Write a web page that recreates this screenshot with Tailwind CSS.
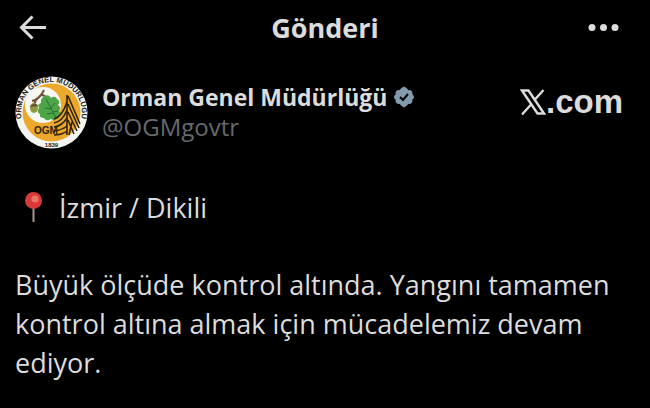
<!DOCTYPE html>
<html lang="tr">
<head>
    <meta charset="UTF-8">
    <meta name="viewport" content="width=device-width, initial-scale=1.0">
    <title>Gönderi</title>
    <script src="https://cdn.jsdelivr.net/npm/@tailwindcss/browser@4"></script>
</head>
<body class="bg-black text-[#dcdcdc] font-['Open_Sans',sans-serif]">

<header class="grid grid-cols-3 items-center h-14 px-4">
    <button class="justify-self-start p-0.5" aria-label="Geri">
        <svg class="w-7 h-7" viewBox="0 0 28 28" fill="none" stroke="currentColor" stroke-width="3">
            <path d="M14.500 2.500 3.500 13.500l11 11M3.500 13.500H28"/>
        </svg>
    </button>
    <h1 class="justify-self-center text-[27px] leading-9 font-bold">Gönderi</h1>
    <button class="justify-self-end pr-3.5" aria-label="Diğer">
        <svg class="w-8 h-8" viewBox="0 0 32 32" fill="currentColor">
            <circle cx="4" cy="15.500" r="3.500"/>
            <circle cx="15.500" cy="15.500" r="3.500"/>
            <circle cx="27" cy="15.500" r="3.500"/>
        </svg>
    </button>
</header>

<main class="px-[15px]">
    <div class="flex items-start justify-between pt-5 pr-3">
        <div class="flex items-start gap-[14px]">
            <svg class="w-[73px] h-[73px] shrink-0" viewBox="0 0 73 73" role="img" aria-label="Orman Genel Müdürlüğü">
                <defs>
                    <path id="ring" d="M15 58A30.400 30.400 0 1 1 58 58"/>
                </defs>
                <circle cx="36.500" cy="36.500" r="36" fill="#f4f4f1"/>
                <circle cx="36.500" cy="36.500" r="29" fill="#eba82c"/>
                <circle cx="28" cy="29" r="18" fill="#f6f7f1"/>
                <text class="font-['Liberation_Sans',sans-serif]" font-size="7.500" font-weight="bold" fill="#222"><textPath href="#ring" startOffset="50%" text-anchor="middle">ORMAN GENEL MÜDÜRLÜĞÜ</textPath></text>
                <path d="M17 25q8-2 12-11m-5 7q-4 3-5 8m7-10q5 0 6 5" fill="none" stroke="#71513a" stroke-width="2"/>
                <path d="M30 20q4-2 6 2 4-3 6 1 4 2 1 6 4 3 1 6 4 3 0 6-4 5-8 2-5 3-7-1-5 0-4-4-4-2-1-6-2-4 2-5-1-5 4-7z" fill="#4da548"/>
                <path d="M31 23 41 42m-5-10 4-5m-2 9 5-1m-7-2-6-1m8 5-6 1" fill="none" stroke="#276d2c"/>
                <ellipse cx="19" cy="32" rx="4" ry="5" fill="#8e9b43"/>
                <path d="M14.500 31q4.500-6 9-1z" fill="#665138"/>
                <g fill="none" stroke="#30240f" stroke-width="1.600">
                    <path d="M39 43q8-2 13-17M39 47q8-1 13-13M39 51q8-1 13-9M39 55q8-1 13-5M39 59q8 0 13-4"/>
                    <path d="M52 19v40M53 20 65 48M53 28l11 24M53 36l9 19M53 44l6 14M54 59l3-13"/>
                </g>
                <text class="font-['Liberation_Sans_Narrow','Liberation_Sans',sans-serif]" x="19" y="58" font-size="10" font-weight="bold" fill="#30240f">OGM</text>
                <text class="font-['Liberation_Sans',sans-serif]" x="36.500" y="71" font-size="6" font-weight="bold" text-anchor="middle" fill="#222">1839</text>
            </svg>
            <div class="pt-1">
                <div class="flex items-center gap-1.5">
                    <h2 class="text-[23px] leading-[34px] font-bold whitespace-nowrap">Orman Genel Müdürlüğü</h2>
                    <svg class="w-[22px] h-[22px] shrink-0" viewBox="0 0 22 22" role="img" aria-label="Onaylanmış hesap">
                        <path fill="#829aab" d="M21 11c0-1.200-.7-2.300-1.800-2.800.5-1.100.2-2.400-.6-3.200s-2.100-1.100-3.200-.7C14.900 3.200 12.200.8 11 .8S7.100 3.200 6.600 4.300c-1.100-.4-2.400-.1-3.200.7s-1.100 2.100-.6 3.200C1.700 8.700 1 9.800 1 11s.7 2.300 1.800 2.800c-.5 1.100-.2 2.400.6 3.200s2.100 1.100 3.200.7c.5 1.100 3.200 3.500 4.400 3.500s3.900-2.400 4.400-3.500c1.100.4 2.400.1 3.200-.7s1.100-2.100.6-3.200c1.100-.5 1.800-1.600 1.800-2.800z"/>
                        <path d="m7 11 3 3 5-6" fill="none" stroke="#050505" stroke-width="2"/>
                    </svg>
                </div>
                <p class="text-2xl leading-[25px] text-[#66696d]">@OGMgovtr</p>
            </div>
        </div>
        <a href="#" class="flex items-center pt-2" aria-label="X.com">
            <svg class="w-[26px] h-[26px]" viewBox="0 0 26 26" fill="none" stroke="currentColor" stroke-width="2.400">
                <path d="M2 1.500h6.500l15.500 23h-6.500zM23.500 1 14.500 11M11.500 15 2 25.500"/>
            </svg>
            <span class="font-['Liberation_Sans',sans-serif] text-[33px] leading-9 font-bold">.com</span>
        </a>
    </div>

    <article class="pt-[39px] text-[27px] leading-[39px]">
        <p class="flex items-center gap-3">
            <svg class="w-8 h-8" viewBox="0 0 32 32" role="img" aria-label="Konum">
                <path d="M18.500 14v16" stroke="#a49691" stroke-width="2"/>
                <circle cx="18.500" cy="8.500" r="8.500" fill="#d83a37"/>
                <circle cx="20" cy="7" r="3.500" fill="#ee7468"/>
            </svg>
            <span>İzmir / Dikili</span>
        </p>
        <p class="pt-[38px]">Büyük ölçüde kontrol altında. Yangını tamamen kontrol altına almak için mücadelemiz devam ediyor.</p>
    </article>
</main>

</body>
</html>
